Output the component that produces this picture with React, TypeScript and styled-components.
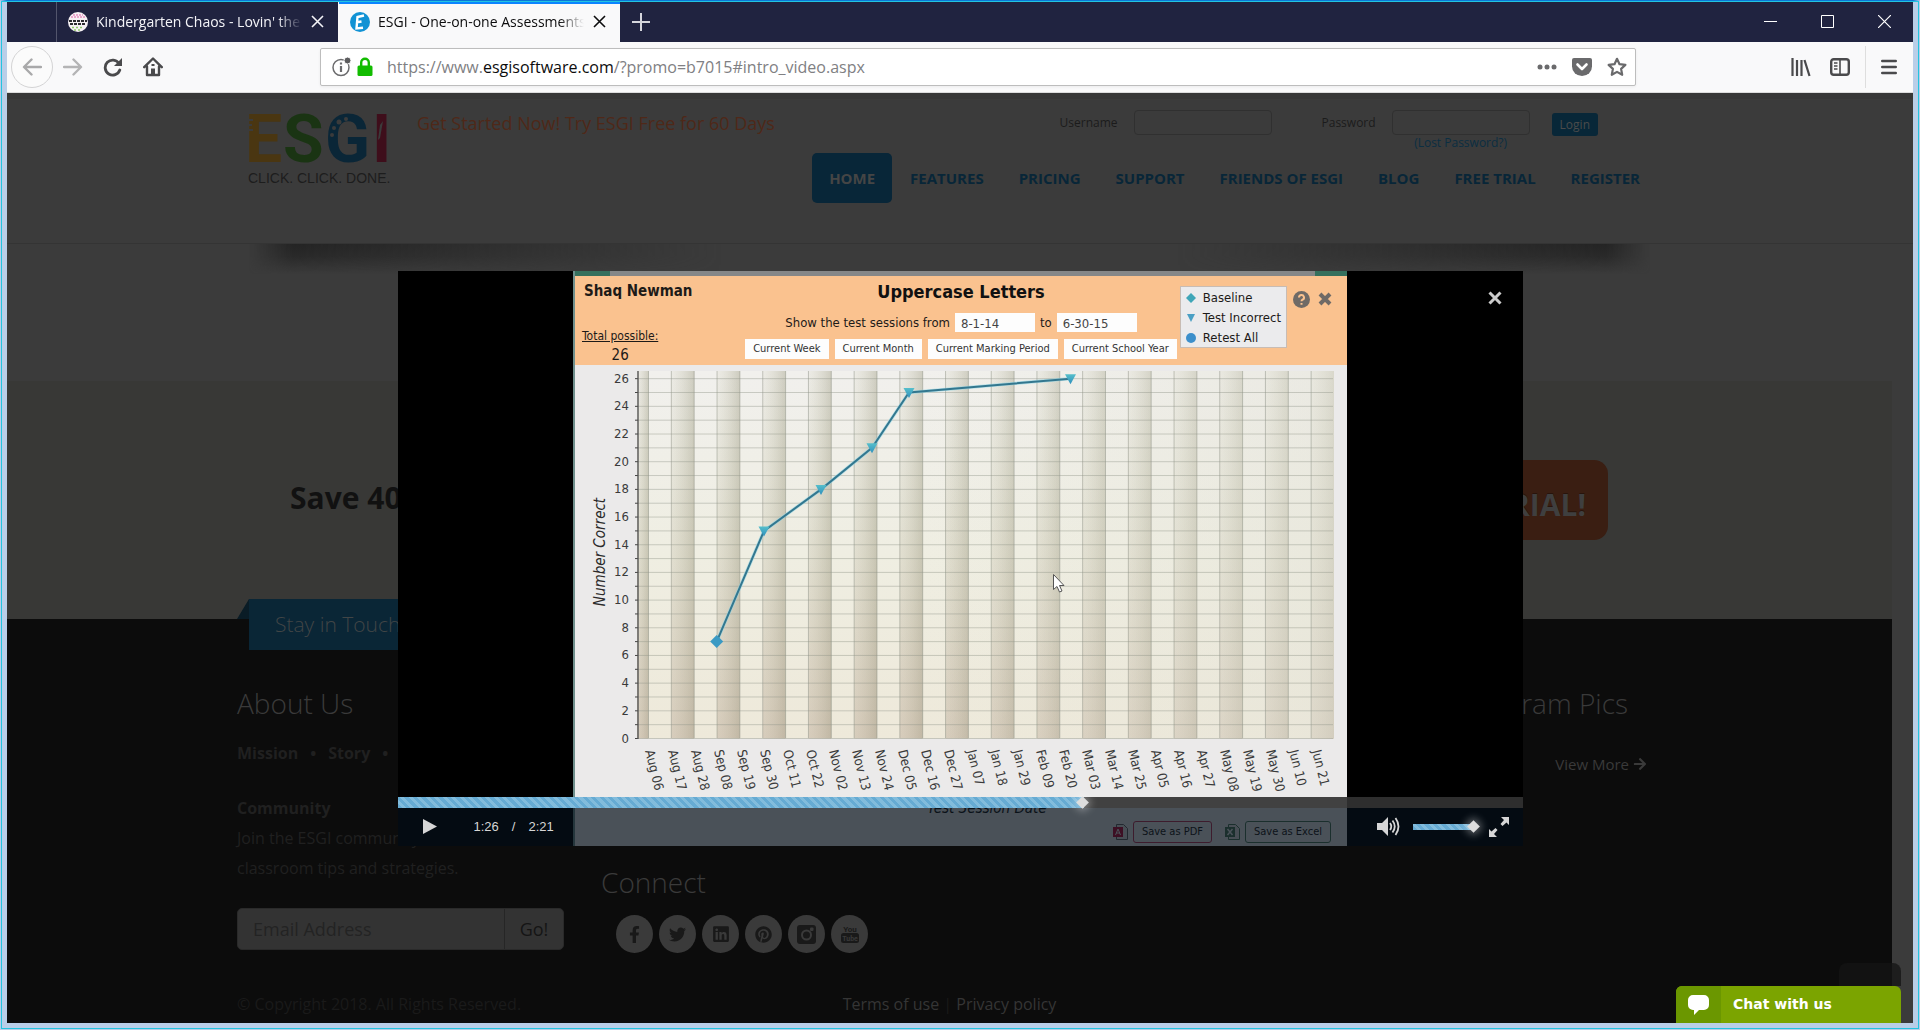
import React from "react";
import styled, { createGlobalStyle, css } from "styled-components";
import { FaArrowRight, FaFacebookF, FaTwitter, FaLinkedin, FaPinterest } from "react-icons/fa";

const ui = `"Open Sans", "Noto Sans", sans-serif`;
const screenFont = `"DejaVu Sans Condensed", "DejaVu Sans", sans-serif`;

const Global = createGlobalStyle`
  *, *::before, *::after { box-sizing: border-box; }
  body { margin: 0; background: #000; font-family: ${ui}; }
  h1, h2, h3, p { margin: 0; font-weight: inherit; }
  button, input { font: inherit; color: inherit; margin: 0; padding: 0; border: 0; background: none; }
  a { color: inherit; text-decoration: none; }
`;

/* ---------- browser window ---------- */

const Frame = styled.div`
  height: 100vh;
  display: flex;
  flex-direction: column;
  border: solid #b9cee8;
  border-width: 0 7px 7px 7px;
  outline: 1px solid #22c4e0;
  outline-offset: -2px;
  border-top: 1px solid #0a78d6;
  overflow: hidden;
`;

const TabBar = styled.div`
  display: flex;
  flex: none;
  height: 41px;
  background: #202340;
  color: #f4f4f8;
  padding-left: 49px;
`;

const Tab = styled.div<{ $active?: boolean }>`
  display: flex;
  align-items: center;
  gap: 8px;
  width: 282px;
  padding: 0 13px 0 11px;
  font-size: 14px;
  border-left: 1px solid #53556c;
  ${(p) =>
    p.$active &&
    css`
      background: #f9f9fa;
      color: #0c0c0d;
      border-left-color: #f9f9fa;
      box-shadow: inset 0 3px 0 #0a84ff;
    `}
`;

const TabTitle = styled.span`
  flex: 1;
  min-width: 0;
  overflow: hidden;
  white-space: nowrap;
  line-height: 24px;
  mask-image: linear-gradient(to right, #000 88%, transparent);
`;

const IconButton = styled.button<{ $w?: number; $color?: string }>`
  display: grid;
  place-items: center;
  flex: none;
  width: ${(p) => p.$w ?? 20}px;
  color: ${(p) => p.$color ?? "inherit"};
`;

const WindowButtons = styled.div`
  display: flex;
  margin-left: auto;
`;

const Toolbar = styled.div`
  display: flex;
  align-items: center;
  flex: none;
  height: 51px;
  padding: 0 4px;
  background: #f9f9fa;
  border-bottom: 1px solid #dcdcdc;
  color: #4a4a4c;
`;

const NavButtons = styled.div`
  display: flex;
  align-items: center;
  gap: 20px;
  width: 309px;
`;

const BackButton = styled.button`
  display: grid;
  place-items: center;
  width: 42px;
  height: 42px;
  margin-right: -10px;
  border: 1px solid #d4d4d5;
  border-radius: 50%;
  background: #fbfbfb;
  color: #a9a9aa;
`;

const UrlBar = styled.div`
  display: flex;
  align-items: center;
  flex: 1 1 0;
  max-width: 1316px;
  height: 38px;
  padding: 0 8px 0 11px;
  background: #fff;
  border: 1px solid #bdbdbd;
  border-radius: 2px;
  box-shadow: 0 1px 3px rgba(0, 0, 0, 0.06);
`;

const Identity = styled.span`
  display: flex;
  gap: 6px;
`;

const Address = styled.span`
  flex: 1;
  margin-left: 14px;
  font-size: 16px;
  line-height: 24px;
  color: #808083;
  b { font-weight: 400; color: #0c0c0d; }
`;

const UrlActions = styled.div`
  display: flex;
  gap: 15px;
  color: #6a6a6c;
`;

const ToolActions = styled.div`
  display: flex;
  align-items: center;
  gap: 19px;
  margin-left: auto;
  padding-right: 12px;
`;

const Divider = styled.span`
  width: 1px;
  height: 42px;
  margin-right: -4px;
  margin-left: -4px;
  background: #dedede;
`;

/* ---------- web page ---------- */

const Viewport = styled.div`
  position: relative;
  flex: 1;
  min-height: 0;
  display: flex;
  flex-direction: column;
  overflow: hidden;
  background: #3b3b3b;
`;

const Container = styled.div`
  width: 1425px;
  max-width: 100%;
  margin: 0 auto;
`;

const Header = styled.header`
  flex: none;
  height: 151px;
  padding-right: 21px;
  border-bottom: 1px solid #343434;
  background: #3b3b3b;
  box-shadow: inset 0 6px 0 #373737;
`;

const HeaderRow = styled(Container)`
  display: flex;
  padding-left: 11px;
`;

const Logo = styled.svg`
  flex: none;
  width: 146px;
  height: 78px;
  margin-top: 15px;
`;

const Promo = styled.p`
  margin: 18px 0 0 23px;
  font-size: 18px;
  line-height: 24px;
  white-space: nowrap;
  color: #4f2818;
`;

const HeaderRight = styled.div`
  margin-left: auto;
  display: flex;
  flex-direction: column;
  align-items: flex-end;
`;

const LoginForm = styled.form`
  display: flex;
  align-items: flex-start;
  height: 60px;
  padding: 17px 64px 0 0;
  font-size: 12px;
  line-height: 26px;
  color: #1b1b1b;
`;

const Field = styled.div`
  display: flex;
  gap: 16px;
  margin-right: 50px;
  &:nth-of-type(2) { margin-right: 22px; }
`;

const FieldBody = styled.div`
  display: flex;
  flex-direction: column;
  align-items: center;
`;

const LoginInput = styled.input`
  width: 138px;
  height: 25px;
  border: 1px solid #303030;
  border-radius: 4px;
`;

const LostLink = styled.a`
  line-height: 16px;
  color: #0b2e42;
`;

const LoginButton = styled.button`
  height: 23px;
  margin-top: 3px;
  padding: 0 8px;
  border-radius: 3px;
  background: #082738;
  color: #4b4b4b;
  line-height: 23px;
`;

const MainNav = styled.nav`
  display: flex;
  gap: 1px;
  margin-right: 5px;
`;

const NavLink = styled.a<{ $current?: boolean }>`
  padding: 0 17px;
  border-radius: 5px;
  font-size: 15px;
  font-weight: 700;
  line-height: 50px;
  white-space: nowrap;
  color: ${(p) => (p.$current ? "#454545" : "#082638")};
  background: ${(p) => (p.$current ? "#082638" : "none")};
`;

const Hero = styled.section`
  flex: none;
  height: 137px;
  padding-right: 21px;
`;

const LiftedShadow = styled(Container)`
  display: flex;
  justify-content: space-between;
  padding: 0 12px;
  &::before, &::after {
    content: "";
    width: 45%;
    height: 30px;
    background: linear-gradient(#242424, #292929 40%, transparent);
  }
  &::before { mask-image: linear-gradient(to right, transparent, #000 7%, transparent 75%); }
  &::after { mask-image: linear-gradient(to left, transparent, #000 7%, transparent 75%); }
`;

const Offer = styled.section`
  flex: none;
  height: 238px;
  margin-right: 21px;
  background: #383836;
`;

const OfferRow = styled(Container)`
  display: flex;
  align-items: center;
  justify-content: space-between;
  height: 100%;
  padding: 0 54px 0 53px;
  font-weight: 700;
`;

const OfferText = styled.h2`
  padding-bottom: 6px;
  font-size: 30px;
  font-weight: 700;
  color: #111;
`;

const TrialButton = styled.button`
  height: 80px;
  padding: 10px 22px 0;
  border-radius: 14px;
  background: #3a1e12;
  color: #3f3f3f;
  font-size: 30px;
  line-height: 40px;
  text-shadow: 0 -1px 0 #28140c;
`;

const Footer = styled.footer`
  flex: 1;
  margin-right: 21px;
  background: #0c0c0c;
  color: #202020;
  font-size: 16px;
  line-height: 30px;
`;

const Ribbon = styled.div`
  position: relative;
  width: 200px;
  margin: -20px 0 0 12px;
  padding-left: 26px;
  background: #0a2636;
  color: #414546;
  font-size: 21px;
  font-weight: 300;
  line-height: 51px;
  &::before {
    content: "";
    position: absolute;
    left: -12px;
    top: 0;
    border-style: solid;
    border-width: 0 0 20px 12px;
    border-color: transparent transparent #0a1c26 transparent;
  }
`;

const FooterGrid = styled.div`
  display: grid;
  grid-template-columns: 364fr 842fr 219fr;
  padding-top: 33px;
`;

const FooterTitle = styled.h3`
  font-size: 28px;
  font-weight: 300;
  line-height: 40px;
  white-space: nowrap;
  color: #3a3a3a;
`;

const AboutLinks = styled.p`
  display: flex;
  gap: 12px;
  margin-top: 15px;
  font-weight: 700;
`;

const Community = styled.p`
  margin-top: 25px;
  white-space: nowrap;
`;

const Subscribe = styled.form`
  display: flex;
  width: 327px;
  height: 42px;
  margin: 25px 0 3px;
  border: 1px solid #2a2a2a;
  border-radius: 5px;
  background: #333;
  font-size: 18px;
  color: #151515;
`;

const EmailInput = styled.input`
  flex: 1;
  min-width: 0;
  padding: 0 15px;
  &::placeholder { color: #232323; opacity: 1; }
`;

const GoButton = styled.button`
  width: 59px;
  border-left: 1px solid #262626;
`;

const ConnectColumn = styled.div`
  align-self: end;
`;

const Social = styled.div`
  display: flex;
  gap: 6px;
  margin-top: 13px;
  padding-left: 15px;
`;

const SocialLink = styled.a`
  display: grid;
  place-items: center;
  width: 37px;
  height: 38px;
  border-radius: 50%;
  background: #3a3a3a;
  color: #191919;
`;

const PicsColumn = styled.div`
  display: flex;
  flex-direction: column;
  align-items: flex-end;
  padding-right: 15px;
  ${FooterTitle} { padding-right: 19px; }
`;

const ViewMore = styled.a`
  display: flex;
  align-items: center;
  gap: 4px;
  margin-top: 26px;
  font-size: 15px;
  color: #3a3a3a;
`;

const Legal = styled.div`
  display: grid;
  grid-template-columns: 1fr auto 1fr;
  margin-top: 36px;
  color: #1a1a1a;
  a { color: #353535; }
`;

/* ---------- video dialog ---------- */

const Overlay = styled.div`
  position: absolute;
  inset: 0;
  display: grid;
  place-items: center;
`;

const Player = styled.div`
  position: relative;
  width: 1125px;
  max-width: 95%;
  height: 575px;
  background: #000;
  overflow: hidden;
`;

const CloseButton = styled.button`
  position: absolute;
  top: 17px;
  right: 18px;
  width: 20px;
  height: 20px;
  color: #ccc;
`;

const Screen = styled.div`
  display: flex;
  flex-direction: column;
  width: 774px;
  height: 100%;
  margin: 0 auto;
  border-left: 2px solid #6f8f8c;
  background: #ebeaea;
  font-family: ${screenFont};
  color: #1d1a18;
`;

const TopStrip = styled.div`
  height: 5px;
  background: linear-gradient(to right, #35705d 35px, #858788 35px calc(100% - 32px), #35705d calc(100% - 32px));
`;

const ReportHead = styled.div`
  display: grid;
  grid-template-columns: 1fr auto 1fr;
  height: 89px;
  background: #fac28f;
`;

const Student = styled.div`
  display: flex;
  flex-direction: column;
  justify-content: space-between;
  align-items: flex-start;
  padding: 5px 0 0 7px;
`;

const StudentName = styled.div`
  font-size: 15px;
  font-weight: 700;
  line-height: 20px;
  padding-left: 2px;
`;

const Total = styled.div`
  text-align: center;
  font-size: 12px;
  line-height: 18px;
  u { display: block; }
  span { font-size: 15px; line-height: 20px; }
`;

const Filters = styled.div`
  display: flex;
  flex-direction: column;
  align-items: center;
`;

const ReportTitle = styled.h1`
  margin: 4px 0 10px;
  font-size: 18px;
  font-weight: 700;
  line-height: 24px;
  color: #111;
`;

const DateRow = styled.div`
  display: flex;
  align-items: center;
  gap: 5px;
  height: 18px;
  margin-bottom: 7px;
  font-size: 13px;
`;

const DateInput = styled.input`
  width: 80px;
  height: 19px;
  padding: 2px 6px 0;
  background: #fdfdfd;
  color: #444;
`;

const RangeRow = styled.div`
  display: flex;
  gap: 6px;
`;

const RangeButton = styled.button`
  height: 20px;
  padding: 0 8px;
  background: #fdfdfd;
  font-size: 11px;
  line-height: 20px;
  white-space: nowrap;
  color: #333;
`;

const HeadRight = styled.div`
  display: flex;
  align-items: flex-start;
  padding: 10px 0 0 3px;
`;

const Legend = styled.ul`
  margin: 0;
  padding: 1px 3px 0 5px;
  width: 107px;
  height: 62px;
  list-style: none;
  border: 1px solid #c8bcb4;
  background: #ebebed;
  font-size: 13px;
  line-height: 20px;
  white-space: nowrap;
  li { display: flex; align-items: center; gap: 7px; }
  svg { flex: none; }
`;

const HeadTools = styled.div`
  display: flex;
  gap: 8px;
  padding: 5px 0 0 6px;
`;

const Exports = styled.div`
  display: flex;
  align-items: center;
  justify-content: flex-end;
  gap: 5px;
  padding: 6px 16px 0 0;
`;

const ExportButton = styled.button<{ $line: string }>`
  height: 22px;
  padding: 0 8px;
  border: 1px solid ${(p) => p.$line};
  border-radius: 3px;
  font-size: 11px;
  line-height: 20px;
  &:not(:last-child) { margin-right: 8px; }
`;

const Controls = styled.div`
  position: absolute;
  left: 0;
  right: 0;
  bottom: 0;
`;

const fill = "repeating-linear-gradient(45deg, #66abd3 0 3px, #82bcdc 3px 6px)";

const Slider = styled.input<{ $filled: string; $height: number; $rest: string }>`
  display: block;
  appearance: none;
  width: 100%;
  height: ${(p) => p.$height}px;
  background: ${fill} 0 0 / ${(p) => p.$filled} 100% no-repeat, ${(p) => p.$rest};
  &::-webkit-slider-thumb {
    appearance: none;
    width: 9px;
    height: 9px;
    background: #ddd;
    transform: rotate(45deg);
    box-shadow: 0 0 8px 2px rgba(255, 255, 255, 0.4);
  }
`;

const ControlBar = styled.div`
  display: flex;
  align-items: center;
  height: 38px;
  padding: 0 14px 0 24px;
  background: rgba(6, 16, 26, 0.7);
  color: #d6d6d6;
  font-family: "Liberation Sans", Arial, sans-serif;
  font-size: 13px;
`;

const Time = styled.div`
  display: flex;
  gap: 13px;
  margin-left: 36px;
`;

const Sound = styled.div`
  display: flex;
  align-items: center;
  gap: 13px;
  margin-left: auto;
  margin-right: 11px;
`;

const VolumeBox = styled.div`
  width: 65px;
`;

/* ---------- floating page widgets ---------- */

const Floating = styled.div`
  position: absolute;
  right: 12px;
  bottom: 0;
  width: 225px;
  display: flex;
  flex-direction: column;
  align-items: flex-end;
`;

const ToTop = styled.div`
  width: 62px;
  height: 23px;
  border-radius: 8px 8px 0 0;
  background: rgba(20, 20, 20, 0.75);
`;

const Chat = styled.button`
  display: flex;
  width: 100%;
  height: 37px;
  overflow: hidden;
  border-radius: 6px 6px 0 0;
  background: #7ba400;
  color: #fff;
  font: 700 14px/37px "DejaVu Sans", sans-serif;
`;

const ChatIcon = styled.span`
  display: grid;
  place-items: center;
  width: 45px;
  height: 37px;
  margin-right: 12px;
  background: #6b9700;
`;

/* ---------- chart ---------- */

const dates = ["Aug 06", "Aug 17", "Aug 28", "Sep 08", "Sep 19", "Sep 30", "Oct 11", "Oct 22", "Nov 02", "Nov 13", "Nov 24", "Dec 05", "Dec 16", "Dec 27", "Jan 07", "Jan 18", "Jan 29", "Feb 09", "Feb 20", "Mar 03", "Mar 14", "Mar 25", "Apr 05", "Apr 16", "Apr 27", "May 08", "May 19", "May 30", "Jun 10", "Jun 21"];
const STEP = 22.85;
const LABEL_STEP = 23;
const colX = (i: number) => 648.5 + STEP * i;
const rowY = (v: number) => 738.5 - 13.84 * v;
const results: [number, number][] = [[716.7, 7], [764, 15], [821, 18], [872, 21], [909, 25], [1070.5, 26]];
const Y_VALUES = Array.from({ length: 27 }, (_, i) => i);

const ChartSvg = styled.svg`
  display: block;
  flex: none;
  width: 100%;
  height: 450px;
  font-family: ${screenFont};
  font-size: 13px;
`;

function Chart() {
  return (
    <ChartSvg viewBox="575 365 772 450" role="img" aria-label="Number correct by test session date">
      <defs>
        <linearGradient id="paper" x1="0" y1="0" x2="0" y2="1">
          <stop offset="0" stopColor="#f1f0ed" />
          <stop offset="0.5" stopColor="#efeee2" />
          <stop offset="1" stopColor="#eee9da" />
        </linearGradient>
        <linearGradient id="warm" x1="0" y1="0" x2="0" y2="1">
          <stop offset="0" stopColor="#a7ab91" stopOpacity="0" />
          <stop offset="1" stopColor="#a08472" stopOpacity="0.25" />
        </linearGradient>
        <linearGradient id="band">
          <stop offset="0" stopColor="#c9c6ae" stopOpacity="0.12" />
          <stop offset="1" stopColor="#9f9d84" stopOpacity="0.44" />
        </linearGradient>
        <linearGradient id="wash">
          <stop offset="0.4" stopColor="#e8e8dc" stopOpacity="0" />
          <stop offset="1" stopColor="#e4e3d8" stopOpacity="0.5" />
        </linearGradient>
        <linearGradient id="marker" x1="0" y1="0" x2="0" y2="1">
          <stop offset="0" stopColor="#56bfcb" />
          <stop offset="1" stopColor="#2f8fbd" />
        </linearGradient>
      </defs>
      <rect x="637" y="371" width="697" height="367.5" fill="url(#paper)" />
      <rect x="637" y="371" width="11.5" height="367.5" fill="url(#band)" />
      <rect x="637" y="371" width="11.5" height="367.5" fill="url(#warm)" />
      {dates.map((d, i) =>
        i % 2 ? (
          <g key={d}>
            <rect x={colX(i)} y="371" width={STEP} height="367.5" fill="url(#band)" />
            <rect x={colX(i)} y="371" width={STEP} height="367.5" fill="url(#warm)" />
          </g>
        ) : null
      )}
      <rect x="637" y="371" width="697" height="367.5" fill="url(#wash)" />
      {dates.map((d, i) => (
        <line key={d} x1={colX(i)} x2={colX(i)} y1="371" y2="738" stroke="#8d9186" strokeOpacity="0.5" />
      ))}
      {Y_VALUES.map((v) => (
        <g key={v}>
          <line x1="637" x2="1333" y1={rowY(v)} y2={rowY(v)} stroke="#8f9388" strokeOpacity="0.42" />
          <line x1="635" x2="638" y1={rowY(v)} y2={rowY(v)} stroke="#444" />
          {v % 2 === 0 && (
            <text x="629" y={rowY(v) + 4} textAnchor="end" fill="#3a3a3a">{v}</text>
          )}
        </g>
      ))}
      <line x1="638" x2="638" y1="371" y2="739" stroke="#555" strokeWidth="1.4" />
      <polyline points={results.map(([x, v]) => `${x},${rowY(v)}`).join(" ")} fill="none" stroke="#8fd6e6" strokeWidth="3.4" strokeOpacity="0.6" />
      <polyline points={results.map(([x, v]) => `${x},${rowY(v)}`).join(" ")} fill="none" stroke="#33778f" strokeWidth="2" />
      {results.map(([x, v], i) =>
        i === 0 ? (
          <path key={x} d={`M${x - 6.5} ${rowY(v)}l6.5-6.5 6.5 6.5-6.5 6.5z`} fill="#3b9ac4" />
        ) : (
          <path key={x} d={`M${x - 5.5} ${rowY(v) - 4.5}h11l-5.5 10z`} fill="url(#marker)" />
        )
      )}
      {dates.map((d, i) => (
        <text key={d} transform={`translate(${645 + LABEL_STEP * i} 751) rotate(76)`} fill="#3a3a3a">{d}</text>
      ))}
      <text transform="translate(605 552) rotate(-90)" textAnchor="middle" fontSize="15" fontStyle="italic" fill="#2b2b2b">Number Correct</text>
      <text x="987" y="813" textAnchor="middle" fontSize="15" fontStyle="italic" fill="#1a1a1a">Test Session Date</text>
      <path d="M1053.500 574.500v15l3.500-3 2.500 5.500 2.500-1-2.500-5.500h4.500z" fill="#fff" stroke="#555" strokeWidth="1" />
    </ChartSvg>
  );
}

function EsgiLogo() {
  const letter = { fontFamily: 'Roboto, "Liberation Sans", sans-serif', fontWeight: 700, fontSize: 66 };
  return (
    <Logo viewBox="0 0 146 78" role="img" aria-label="ESGI Click. Click. Done.">
      <text x="-3" y="54" fill="#4a3611" {...letter}>E</text>
      <text x="35" y="54" fill="#1a3413" {...letter}>S</text>
      <text x="77" y="54" fill="#0a2637" {...letter}>G</text>
      <text x="124" y="54" fill="#3e0e1b" {...letter}>I</text>
      <g fill="#3b3b3b">
        <path d="M0 11h5v2H0zM0 16h4v2H0zM0 21h5v2H0z" />
        <circle cx="98" cy="11" r="2" />
        <circle cx="91" cy="14" r="2.500" />
        <circle cx="86" cy="20" r="2" />
        <circle cx="84" cy="27" r="2" />
        <path d="M132 17l3-4-3 17-2 2z" />
      </g>
      <text x="0" y="75" fontFamily='"Liberation Sans", sans-serif' fontSize="14" fill="#1d1d1d">CLICK. CLICK. DONE.</text>
    </Logo>
  );
}

const InstagramCamera = () => (
  <svg width="19" height="19" viewBox="0 0 19 19">
    <rect width="19" height="19" rx="3" fill="currentColor" />
    <circle cx="9.500" cy="10" r="4.500" fill="none" stroke="#3a3a3a" strokeWidth="2" />
    <rect x="13" y="2.500" width="3.500" height="3.500" rx="1" fill="#3a3a3a" />
  </svg>
);

const YouTubeBadge = () => (
  <svg width="20" height="20" viewBox="0 0 20 20" fontFamily="Roboto, sans-serif" fontWeight="700" textAnchor="middle">
    <text x="10" y="8" fontSize="8" fill="currentColor">You</text>
    <rect x="1" y="9" width="18" height="10" rx="2.500" fill="currentColor" />
    <text x="10" y="17" fontSize="7" fill="#3a3a3a">Tube</text>
  </svg>
);

const stroke = { fill: "none", stroke: "currentColor", strokeWidth: 2.4, strokeLinecap: "round", strokeLinejoin: "round" } as const;

const navItems = ["HOME", "FEATURES", "PRICING", "SUPPORT", "FRIENDS OF ESGI", "BLOG", "FREE TRIAL", "REGISTER"];
const socials = [
  ["Facebook", <FaFacebookF size={17} />],
  ["Twitter", <FaTwitter size={17} />],
  ["LinkedIn", <FaLinkedin size={18} />],
  ["Pinterest", <FaPinterest size={17} />],
  ["Instagram", <InstagramCamera />],
  ["YouTube", <YouTubeBadge />],
] as const;

const TabClose = () => (
  <IconButton $w={15} aria-label="Close tab">
    <svg width="13" height="13" viewBox="0 0 13 13"><path d="M1 1l11 11M12 1L1 12" stroke="currentColor" strokeWidth="1.600" /></svg>
  </IconButton>
);

function BrowserChrome() {
  return (
    <>
      <TabBar>
        <Tab>
          <svg width="20" height="20" viewBox="0 0 20 20">
            <circle cx="10" cy="10" r="10" fill="#f6f1f4" />
            <path d="M3 5h14M5 3h10" stroke="#e58fc0" strokeWidth="1.500" strokeDasharray="2 1" />
            <path d="M1 9h18M2 12h16" stroke="#2c2c30" strokeWidth="2.200" strokeDasharray="3 1" />
            <path d="M4 15.500h12M6 18h8" stroke="#8ecb6a" strokeWidth="1.500" strokeDasharray="2 2" />
          </svg>
          <TabTitle>Kindergarten Chaos - Lovin' the</TabTitle>
          <TabClose />
        </Tab>
        <Tab $active>
          <svg width="20" height="20" viewBox="0 0 20 20">
            <circle cx="10" cy="10" r="10" fill="#1192d4" />
            <path d="M14 3.500L7.500 5l-1 11.500 6.500-.8M7 10.200l4.500-.7" fill="none" stroke="#fff" strokeWidth="2.400" />
          </svg>
          <TabTitle>ESGI - One-on-one Assessments</TabTitle>
          <TabClose />
        </Tab>
        <IconButton $w={42} $color="#d5d5dc" aria-label="New tab"><svg width="18" height="18" viewBox="0 0 18 18"><path d="M9 0v18M0 9h18" stroke="currentColor" strokeWidth="2" /></svg></IconButton>
        <WindowButtons>
          <IconButton $w={57} aria-label="Minimize"><svg width="13" height="13"><path d="M0 6.500h13" stroke="#fff" /></svg></IconButton>
          <IconButton $w={57} aria-label="Maximize"><svg width="13" height="13"><path d="M.5.5h12v12H.5z" fill="none" stroke="#fff" /></svg></IconButton>
          <IconButton $w={57} aria-label="Close"><svg width="13" height="13"><path d="M0 0l13 13M13 0L0 13" stroke="#fff" strokeWidth="1.200" /></svg></IconButton>
        </WindowButtons>
      </TabBar>
      <Toolbar>
        <NavButtons>
          <BackButton aria-label="Back"><svg width="20" height="18" viewBox="0 0 20 18"><path d="M9.500 1.500L2 9l7.500 7.500M2.500 9H19" {...stroke} /></svg></BackButton>
          <IconButton $color="#b4b4b5" aria-label="Forward"><svg width="20" height="18" viewBox="0 0 20 18"><path d="M10.500 1.500L18 9l-7.500 7.500M17.500 9H1" {...stroke} /></svg></IconButton>
          <IconButton aria-label="Reload"><svg width="20" height="20" viewBox="0 0 20 20"><path d="M16 6.500A7.500 7.500 0 1 0 16.800 13" {...stroke} strokeWidth="2.800" /><path d="M19 1v8h-8z" fill="currentColor" /></svg></IconButton>
          <IconButton aria-label="Home"><svg width="20" height="20" viewBox="0 0 20 20"><path d="M1.200 10.200L10 1.500l8.800 8.700M4 9.500V18h12V9.500" {...stroke} /><path d="M8 18v-6.500h4V18z" fill="currentColor" /><path d="M8.500 8h3" stroke="currentColor" strokeWidth="2" /></svg></IconButton>
        </NavButtons>
        <UrlBar>
          <Identity>
            <svg width="19" height="20" viewBox="0 0 19 20"><circle cx="9" cy="10.500" r="8" fill="none" stroke="#6b6b6d" strokeWidth="1.500" /><path d="M9 9v6M9 5.500v2" stroke="#6b6b6d" strokeWidth="2.200" /><circle cx="15.500" cy="3.500" r="3.500" fill="#5c5c5e" stroke="#fff" /></svg>
            <svg width="16" height="20" viewBox="0 0 16 20"><path d="M4.200 9V5.500a3.800 3.800 0 0 1 7.600 0V9" fill="none" stroke="#12bc00" strokeWidth="2.400" /><rect x="0.500" y="8.500" width="15" height="10.500" rx="1.500" fill="#12bc00" /></svg>
          </Identity>
          <Address>https://www.<b>esgisoftware.com</b>/?promo=b7015#intro_video.aspx</Address>
          <UrlActions>
            <IconButton aria-label="Page actions"><svg width="20" height="20"><g fill="currentColor"><circle cx="3" cy="10" r="2.500" /><circle cx="10" cy="10" r="2.500" /><circle cx="17" cy="10" r="2.500" /></g></svg></IconButton>
            <IconButton aria-label="Save to Pocket"><svg width="20" height="20" viewBox="0 0 20 20"><path d="M2 1h16a2 2 0 0 1 2 2v6.500a10 9.500 0 0 1-20 0V3a2 2 0 0 1 2-2z" fill="currentColor" /><path d="M5.500 7.500L10 12l4.500-4.500" fill="none" stroke="#fff" strokeWidth="2.600" strokeLinecap="round" strokeLinejoin="round" /></svg></IconButton>
            <IconButton aria-label="Bookmark"><svg width="20" height="20" viewBox="0 0 20 20"><path d="M10 1.800l2.500 5.400 5.900.7-4.300 4 1.100 5.900L10 14.900l-5.200 2.900 1.100-5.900-4.300-4 5.900-.7z" {...stroke} strokeWidth="2.200" /></svg></IconButton>
          </UrlActions>
        </UrlBar>
        <ToolActions>
          <IconButton aria-label="Library"><svg width="20" height="20" viewBox="0 0 20 20"><path d="M1.500 1v18M6 3v16M10.500 3v16M13.500 3l5 16" stroke="currentColor" strokeWidth="2.200" fill="none" /></svg></IconButton>
          <IconButton aria-label="Sidebars"><svg width="20" height="20" viewBox="0 0 20 20"><rect x="1.200" y="2.200" width="17.600" height="15.600" rx="2.500" {...stroke} /><path d="M10 2v16" stroke="currentColor" strokeWidth="1.600" /><path d="M4 6h3.500M4 9h3.500M4 12h3.500" stroke="currentColor" strokeWidth="1.300" /></svg></IconButton>
          <Divider />
          <IconButton $w={16} aria-label="Menu"><svg width="16" height="16" viewBox="0 0 16 16"><path d="M1.200 2h13.600M1.200 8h13.600M1.200 14h13.600" {...stroke} /></svg></IconButton>
        </ToolActions>
      </Toolbar>
    </>
  );
}

function VideoPlayer() {
  return (
    <Player role="dialog" aria-label="Intro video">
      <Screen>
        <TopStrip />
        <ReportHead>
          <Student>
            <StudentName>Shaq Newman</StudentName>
            <Total><u>Total possible:</u><span>26</span></Total>
          </Student>
          <Filters>
            <ReportTitle>Uppercase Letters</ReportTitle>
            <DateRow>
              <label htmlFor="from">Show the test sessions from</label>
              <DateInput id="from" defaultValue="8-1-14" />
              <label htmlFor="to">to</label>
              <DateInput id="to" defaultValue="6-30-15" />
            </DateRow>
            <RangeRow>
              <RangeButton>Current Week</RangeButton>
              <RangeButton>Current Month</RangeButton>
              <RangeButton>Current Marking Period</RangeButton>
              <RangeButton>Current School Year</RangeButton>
            </RangeRow>
          </Filters>
          <HeadRight>
            <Legend>
              <li><svg width="10" height="10"><path d="M5 0l5 5-5 5-5-5z" fill="#3fa6b8" /></svg>Baseline</li>
              <li><svg width="10" height="10"><path d="M1 1h8L5 9z" fill="#4a9fc4" /></svg>Test Incorrect</li>
              <li><svg width="10" height="10"><circle cx="5" cy="5" r="5" fill="#3c8fcb" /></svg>Retest All</li>
            </Legend>
            <HeadTools>
              <IconButton $w={17} $color="#6f6a66" aria-label="Help"><svg width="17" height="17" viewBox="0 0 17 17"><circle cx="8.500" cy="8.500" r="8.500" fill="currentColor" /><path d="M6 6.500a2.500 2.500 0 1 1 3.600 2.200c-.8.400-1.100.8-1.100 1.600M8.500 12v1.800" fill="none" stroke="#fac28f" strokeWidth="2" /></svg></IconButton>
              <IconButton $w={14} $color="#6f6a66" aria-label="Close report"><svg width="14" height="14"><path d="M2 2l10 10M12 2L2 12" stroke="currentColor" strokeWidth="4" /></svg></IconButton>
            </HeadTools>
          </HeadRight>
        </ReportHead>
        <Chart />
        <Exports>
          <svg width="15" height="16"><path d="M3.500.5h7l4 4v11h-11z" fill="#e4e0e0" stroke="#666" /><path d="M0 3h10v10H0z" fill="#c0123c" /><path d="M2.500 11L5 5l2.500 6M3 9h4" stroke="#eee" fill="none" /></svg>
          <ExportButton $line="#c03a5c">Save as PDF</ExportButton>
          <svg width="15" height="16"><path d="M3.500.5h7l4 4v11h-11z" fill="#e4e0e0" stroke="#4d7a5d" /><path d="M0 3h10v10H0z" fill="#4d7a5d" /><path d="M2.500 5l5 6M7.500 5l-5 6" stroke="#eee" fill="none" strokeWidth="1.500" /></svg>
          <ExportButton $line="#4d7a5d">Save as Excel</ExportButton>
        </Exports>
      </Screen>
      <CloseButton aria-label="Close video"><svg width="14" height="14"><path d="M1.500 1.500l11 11M12.500 1.500l-11 11" stroke="currentColor" strokeWidth="3" /></svg></CloseButton>
      <Controls>
        <Slider type="range" aria-label="Seek" min={0} max={141} defaultValue={86} $filled="61%" $height={11} $rest="rgba(50, 50, 50, 0.92)" />
        <ControlBar>
          <IconButton $w={16} aria-label="Play"><svg width="14" height="15"><path d="M0 0l14 7.500L0 15z" fill="currentColor" /></svg></IconButton>
          <Time><span>1:26</span><span>/</span><span>2:21</span></Time>
          <Sound>
            <IconButton $w={23} aria-label="Mute"><svg width="23" height="19" viewBox="0 0 23 19"><path d="M0 6h5l6-6v19l-6-6H0z" fill="currentColor" /><path d="M13 6q2.500 3.500 0 7M15.500 3.500q4.500 6 0 12M18.500 1q6 8.500 0 17" fill="none" stroke="currentColor" strokeWidth="1.800" /></svg></IconButton>
            <VolumeBox><Slider type="range" aria-label="Volume" min={0} max={100} defaultValue={100} $filled="92%" $height={6} $rest="none" /></VolumeBox>
          </Sound>
          <IconButton $w={20} aria-label="Full screen"><svg width="20" height="20"><path d="M12 0h8v8l-2.500-2.500-4 3.500-2-2 3.500-4zM8 20H0v-8l2.500 2.500 4-3.500 2 2L5 17z" fill="currentColor" /></svg></IconButton>
        </ControlBar>
      </Controls>
    </Player>
  );
}

export default function App() {
  return (
    <Frame>
      <Global />
      <BrowserChrome />
      <Viewport>
        <Header>
          <HeaderRow>
            <EsgiLogo />
            <Promo>Get Started Now! Try ESGI Free for 60 Days</Promo>
            <HeaderRight>
              <LoginForm>
                <Field>
                  <label htmlFor="user">Username</label>
                  <LoginInput id="user" />
                </Field>
                <Field>
                  <label htmlFor="pass">Password</label>
                  <FieldBody>
                    <LoginInput id="pass" type="password" />
                    <LostLink href="#lost">(Lost Password?)</LostLink>
                  </FieldBody>
                </Field>
                <LoginButton type="button">Login</LoginButton>
              </LoginForm>
              <MainNav>
                {navItems.map((n, i) => (
                  <NavLink key={n} href="#nav" $current={i === 0}>{n}</NavLink>
                ))}
              </MainNav>
            </HeaderRight>
          </HeaderRow>
        </Header>
        <Hero><LiftedShadow /></Hero>
        <Offer>
          <OfferRow>
            <OfferText>Save 40%</OfferText>
            <TrialButton>FREE TRIAL!</TrialButton>
          </OfferRow>
        </Offer>
        <Footer>
          <Container>
            <Ribbon>Stay in Touch</Ribbon>
            <FooterGrid>
              <div>
                <FooterTitle>About Us</FooterTitle>
                <AboutLinks><a href="#mission">Mission</a><span>•</span><a href="#story">Story</a><span>•</span></AboutLinks>
                <Community><b>Community</b><br />Join the ESGI community<br />classroom tips and strategies.</Community>
                <Subscribe>
                  <EmailInput placeholder="Email Address" aria-label="Email Address" />
                  <GoButton type="button">Go!</GoButton>
                </Subscribe>
              </div>
              <ConnectColumn>
                <FooterTitle>Connect</FooterTitle>
                <Social>
                  {socials.map(([name, icon]) => (
                    <SocialLink key={name} href="#social" aria-label={name}>{icon}</SocialLink>
                  ))}
                </Social>
              </ConnectColumn>
              <PicsColumn>
                <FooterTitle>Instagram Pics</FooterTitle>
                <ViewMore href="#pics">View More <FaArrowRight size={14} /></ViewMore>
              </PicsColumn>
            </FooterGrid>
            <Legal>
              <span>© Copyright 2018. All Rights Reserved.</span>
              <span><a href="#terms">Terms of use</a> | <a href="#privacy">Privacy policy</a></span>
            </Legal>
          </Container>
        </Footer>
        <Overlay><VideoPlayer /></Overlay>
        <Floating>
          <ToTop />
          <Chat>
            <ChatIcon><svg width="21" height="20"><path d="M5 0h11a5 5 0 0 1 5 5v5a5 5 0 0 1-5 5h-5l-5 5v-5H5a5 5 0 0 1-5-5V5a5 5 0 0 1 5-5z" fill="#fff" /></svg></ChatIcon>
            Chat with us
          </Chat>
        </Floating>
      </Viewport>
    </Frame>
  );
}
